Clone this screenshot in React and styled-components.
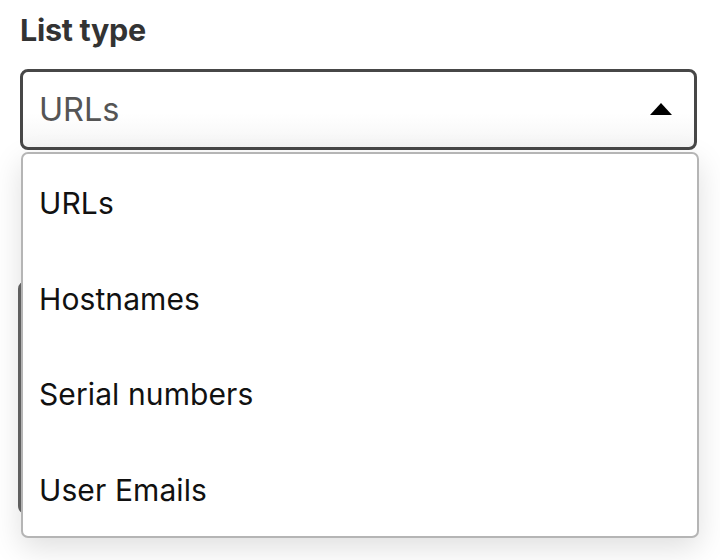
import React from 'react';
import styled, { createGlobalStyle } from 'styled-components';

const GlobalStyle = createGlobalStyle`
  html, body, #root {
    min-height: 560px;
  }

  body {
    margin: 0;
    background: #fff;
    font-family: Inter, "Noto Sans", sans-serif;
  }
`;

const options = ['URLs', 'Hostnames', 'Serial numbers', 'User Emails'];

const Form = styled.div`
  display: flex;
  flex-direction: column;
  padding: 11px 23px 0 20px;
`;

const Label = styled.div`
  color: #333;
  font-size: 30.5px;
  font-weight: 700;
  letter-spacing: -0.3px;
  line-height: 37px;
  margin-bottom: 21px;
`;

const SelectWrap = styled.div`
  position: relative;
  z-index: 2;
`;

const SelectBox = styled.div`
  display: flex;
  align-items: center;
  justify-content: space-between;
  box-sizing: border-box;
  height: 81px;
  padding: 0 22px 0 16px;

  color: #555;
  font-size: 32.5px;
  letter-spacing: -0.1px;

  border: 3px solid #474747;
  border-radius: 8px;
  background: linear-gradient(#fff 55%, #f5f5f5);
`;

const Caret = styled.span`
  width: 0;
  height: 0;
  border-left: 11px solid transparent;
  border-right: 11px solid transparent;
  border-bottom: 12px solid #000;
  margin-top: -2px;
`;

const Menu = styled.div`
  position: absolute;
  top: calc(100% + 2px);
  left: 1px;
  right: -2px;
  box-sizing: border-box;

  background: #fff;
  border: 2px solid #b5b5b5;
  border-radius: 7px;
  box-shadow: 0 10px 30px rgba(0, 0, 0, 0.13);
`;

const Option = styled.div`
  display: flex;
  align-items: center;
  box-sizing: border-box;
  height: 95.5px;
  padding: 3px 16px 0;

  color: #111;
  font-size: 30px;
  letter-spacing: 0.1px;
`;

const TextBox = styled.div`
  height: 233px;
  margin: 131px 0 0 -2px;
  box-sizing: border-box;
  border: 3px solid #666;
  border-radius: 8px;
`;

export default function App() {
  return (
    <>
      <GlobalStyle />
      <Form>
        <Label>List type</Label>
        <SelectWrap>
          <SelectBox>
            <span>URLs</span>
            <Caret />
          </SelectBox>
          <Menu>
            {options.map(option => (
              <Option key={option}>{option}</Option>
            ))}
          </Menu>
        </SelectWrap>
        <TextBox />
      </Form>
    </>
  );
}
